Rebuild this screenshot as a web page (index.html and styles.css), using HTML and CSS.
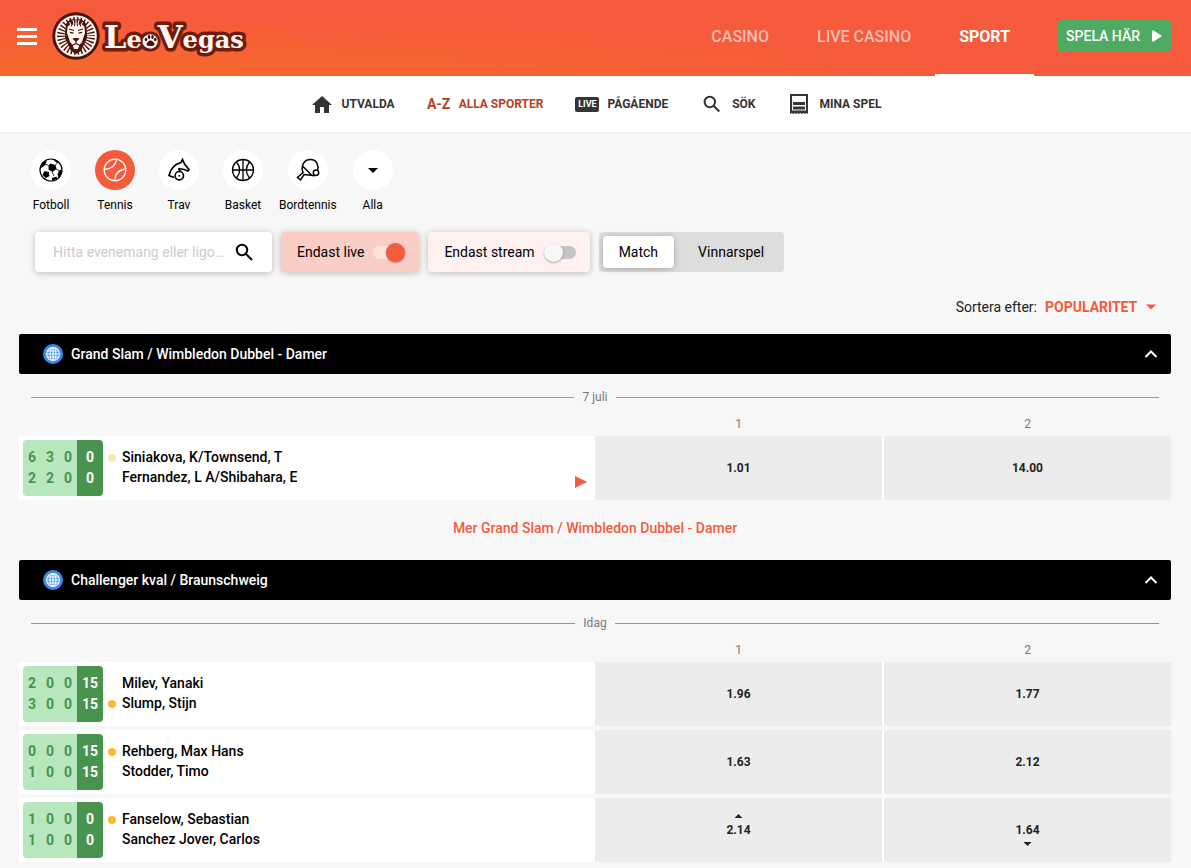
FILE: index.html
```html
<!DOCTYPE html>
<html lang="sv">
<head>
<meta charset="utf-8">
<meta name="viewport" content="width=device-width, initial-scale=1">
<title>LeoVegas Sport</title>
<link rel="stylesheet" href="styles.css">
</head>
<body>
<svg class="defs" aria-hidden="true">
  <symbol id="globe" viewBox="0 0 20 20">
    <circle cx="10" cy="10" r="10" fill="#3a8af5"/>
    <g fill="none" stroke="#fff" stroke-width="1.1"><circle cx="10" cy="10" r="6.400"/><ellipse cx="10" cy="10" rx="3" ry="6.400"/><path d="M10 3.600v12.800M3.600 10h12.800M4.600 7h10.800M4.600 13h10.800"/></g>
  </symbol>
  <symbol id="chevron" viewBox="0 0 14 10"><path d="M1.500 8 7 2.500 12.500 8" fill="none" stroke="#fff" stroke-width="2"/></symbol>
</svg>

<header class="topbar">
  <button class="menu" aria-label="Meny"><span class="menu-line"></span><span class="menu-line"></span><span class="menu-line"></span></button>
  <a class="logo" href="#" aria-label="LeoVegas">
    <svg width="196" height="50" viewBox="0 0 196 50">
      <circle cx="24" cy="25" r="23.700" fill="#4c130a"/>
      <circle cx="24" cy="25" r="20.800" fill="#fff6f2"/>
      <circle cx="24" cy="25" r="19" fill="#4c130a"/>
      <circle cx="24" cy="25" r="15.500" fill="none" stroke="#fff6f2" stroke-width="9" stroke-dasharray="1.900 1.346"/>
      <path d="M14 13c2-4 5-5 10-5s8 1 10 5l1 8-2 10-4 9-5 3-5-3-4-9-2-10z" fill="#4c130a"/>
      <path d="M15.500 16l3-3 1 3 2-4 1 4 1.500-5 1.500 5 1-4 2 4 1-3 3 3 .5 6-1.500 4-1.500 5-2.500 3-1.500 4h-4l-1.500-4-2.500-3-1.500-5-1.500-4z" fill="#fff6f2"/>
      <path d="M17 18l5 1.500M31 18l-5 1.500M17.800 21.300l3.700.8M30.200 21.300l-3.700.8M21 27.500l3 2.500 3-2.500M24 29.500v3M20 34.500l4-2 4 2" fill="none" stroke="#4c130a" stroke-width="1.300"/>
      <path d="M21.500 27h5L24 30z" fill="#4c130a"/>
      <path d="M21 9l1 4M24 7.500V13M27 9l-1 4M17.500 11l1.500 3M30.500 11L29 14" stroke="#fff6f2" stroke-width="1"/>
      <g class="wordmark">
        <text class="wordmark-outline" x="52" y="37"><tspan class="wordmark-cap">L</tspan>eo<tspan class="wordmark-cap">V</tspan>egas</text>
        <text class="wordmark-face" x="52" y="37" aria-hidden="true"><tspan class="wordmark-cap">L</tspan>eo<tspan class="wordmark-cap">V</tspan>egas</text>
      </g>
      <g fill="#4c130a"><circle cx="98.500" cy="30.500" r="7.200" fill="#fff6f2"/><path d="M98.500 29.500c2 0 4 2.500 4 4s-2 1.500-4 1.500-4 0-4-1.500 2-4 4-4z"/><ellipse cx="94" cy="28.500" rx="1.300" ry="1.800"/><ellipse cx="97" cy="26" rx="1.300" ry="1.900"/><ellipse cx="100.500" cy="26" rx="1.300" ry="1.900"/><ellipse cx="103.200" cy="28.500" rx="1.300" ry="1.800"/></g>
    </svg>
  </a>
  <nav class="mainnav" aria-label="Huvudmeny">
    <a class="mainnav-link" href="#">CASINO</a>
    <a class="mainnav-link" href="#">LIVE CASINO</a>
    <a class="mainnav-link is-active" href="#">SPORT</a>
  </nav>
  <button class="play">SPELA HÄR <svg width="10" height="12" viewBox="0 0 10 12"><path d="M0 1.500Q0-.3 1.500.5L9 5.200Q10 6 9 6.800L1.500 11.500Q0 12.300 0 10.500z" fill="#fff"/></svg></button>
</header>

<nav class="subnav" aria-label="Sport">
  <a class="subnav-link" href="#"><svg width="24" height="24" viewBox="0 0 24 24"><path d="M12 4 2 13H5V21h5v-6h4v6h5v-8h3z" fill="#343434"/></svg>UTVALDA</a>
  <a class="subnav-link is-active" href="#"><span class="az">A-Z</span>ALLA SPORTER</a>
  <a class="subnav-link" href="#"><span class="live-tag">LIVE</span>PÅGÅENDE</a>
  <a class="subnav-link" href="#"><svg width="24" height="24" viewBox="0 0 24 24"><g fill="none" stroke="#343434" stroke-width="2"><circle cx="9.800" cy="10" r="5.200"/><path d="M13.500 13.700 19.300 19.500"/></g></svg>SÖK</a>
  <a class="subnav-link" href="#"><svg width="24" height="24" viewBox="0 0 24 24"><path d="M4 20V3h16v17" fill="none" stroke="#343434" stroke-width="2"/><path d="M3 18.500h18V22l-1.500-1-1.500 1-1.500-1-1.500 1-1.500-1-1.500 1-1.500-1L9 22l-1.500-1L6 22l-1.500-1L3 22zM6 10h12v3H6zM6 14.500h12v3H6z" fill="#343434"/></svg>MINA SPEL</a>
</nav>

<main>
  <nav class="sports" aria-label="Sporter">
    <a class="sport" href="#"><span class="sport-icon"><svg width="24" height="24" viewBox="0 0 24 24"><circle cx="12" cy="12" r="11" fill="none" stroke="#000" stroke-width="1.200"/><path d="M11.500 5.500l5 1.500 1 4-4 3-4-2.500v-4zM5.500 13l4 1 1 4-3.500 2-3.500-3zM3.500 5 8 2 6.500 7 1.500 10.500zM14 1.500l4 1 3 3-3.500-1zM20 12.500l2.800-1-.8 5-2.500 3-1-3zM13 20l4.500-1.500L18 20.500l-5 2.300z"/><path d="M6.500 6l3 1.500M10 14l-1 .5M13 14l2 4M17 11l3.500 1.500M16.500 7l2-2.500" stroke="#000" stroke-width=".8"/></svg></span>Fotboll</a>
    <a class="sport is-active" href="#"><span class="sport-icon"><svg width="24" height="24" viewBox="0 0 24 24"><g fill="none" stroke="#fff" stroke-width="1.300"><circle cx="12" cy="12" r="10.800"/><path d="M1.500 11.500C8 11 12.500 8 13.500 1.500M12 22.500C11.500 16 16 11.500 22.500 11"/></g><path d="M4 11.500C9.500 10 12 7 12.500 4M13 19c.5-3 4-6 7.500-7" fill="none" stroke="#fff" stroke-width=".5" stroke-dasharray="1 1"/></svg></span>Tennis</a>
    <a class="sport" href="#"><span class="sport-icon"><svg width="24" height="24" viewBox="0 0 24 24"><g fill="none" stroke="#000" stroke-width="1.700"><path d="M7 19.500 2 17.500C3.500 10.500 8 6 14 4.500L15.500 1.500 17.500 6 22 11.500 21 13 17 11.500 11.500 10.500"/><circle cx="12.300" cy="17.700" r="4.200"/><path d="M12.300 17v1.500M11.500 10.500l2 3"/></g></svg></span>Trav</a>
    <a class="sport" href="#"><span class="sport-icon"><svg width="24" height="24" viewBox="0 0 24 24"><g fill="none" stroke="#000" stroke-width="1.300"><circle cx="12" cy="12" r="10.500"/><path d="M12 1.500v21M1.500 12h21M5.500 4C9.500 9 9.500 15 5.500 20M18.500 4C14.500 9 14.500 15 18.500 20"/></g></svg></span>Basket</a>
    <a class="sport" href="#"><span class="sport-icon"><svg width="24" height="24" viewBox="0 0 24 24"><g fill="none" stroke="#000" stroke-width="1.500"><path d="M18.500 18 17 17.500 8 16.500 4.500 22 1.500 19.500 7 14.500C4.500 8 8 1.500 14.500 1.500S23 8 21.500 12.500M7 8.500 16 17.500"/><circle cx="20" cy="14.800" r="2.700"/></g></svg></span>Bordtennis</a>
    <a class="sport" href="#"><span class="sport-icon"><svg width="24" height="24" viewBox="0 0 24 24"><path d="M7 10h10l-5 5z"/></svg></span>Alla</a>
  </nav>

  <form class="filters">
    <label class="search"><input class="search-input" type="text" placeholder="Hitta evenemang eller ligor här" aria-label="Hitta evenemang eller ligor">
      <svg width="18" height="18" viewBox="0 0 18 18"><g fill="none" stroke="#000" stroke-width="2"><circle cx="7" cy="7" r="5.200"/><path d="M10.800 10.800 17 17"/></g></svg></label>
    <label class="toggle toggle-live">Endast live<input class="switch" type="checkbox" checked></label>
    <label class="toggle toggle-stream">Endast stream<input class="switch" type="checkbox"></label>
    <div class="segment"><button type="button" class="segment-item is-active">Match</button><button type="button" class="segment-item">Vinnarspel</button></div>
  </form>

  <div class="sort">
    <label for="sort">Sortera efter:</label>
    <span class="sort-field"><select class="sort-select" id="sort"><option>POPULARITET</option></select><svg width="10" height="6" viewBox="0 0 10 6"><path d="M0 .5h10L5 5.500z" fill="#f45b3d"/></svg></span>
  </div>

  <section class="league">
    <button class="league-head"><svg width="20" height="20"><use href="#globe"/></svg><span class="league-name">Grand Slam / Wimbledon Dubbel - Damer</span><svg width="14" height="10"><use href="#chevron"/></svg></button>
    <div class="date">7 juli</div>
    <div class="cols"><span></span><div class="odds"><span>1</span><span>2</span></div></div>
    <div class="match">
      <div class="match-info">
        <div class="score"><div class="sets"><span>6</span><span>3</span><span>0</span><span>2</span><span>2</span><span>0</span></div><div class="points"><span>0</span><span>0</span></div></div>
        <div class="players"><span class="player serving is-faded">Siniakova, K/Townsend, T</span><span class="player">Fernandez, L A/Shibahara, E</span></div>
        <svg class="stream" width="12" height="12" viewBox="0 0 12 12"><path d="M0 0 12 6 0 12z" fill="#f45b3d"/></svg>
      </div>
      <div class="odds"><button class="odd">1.01</button><button class="odd">14.00</button></div>
    </div>
    <a class="more" href="#">Mer Grand Slam / Wimbledon Dubbel - Damer</a>
  </section>

  <section class="league">
    <button class="league-head"><svg width="20" height="20"><use href="#globe"/></svg><span class="league-name">Challenger kval / Braunschweig</span><svg width="14" height="10"><use href="#chevron"/></svg></button>
    <div class="date">Idag</div>
    <div class="cols"><span></span><div class="odds"><span>1</span><span>2</span></div></div>
    <div class="match">
      <div class="match-info">
        <div class="score"><div class="sets"><span>2</span><span>0</span><span>0</span><span>3</span><span>0</span><span>0</span></div><div class="points"><span>15</span><span>15</span></div></div>
        <div class="players"><span class="player">Milev, Yanaki</span><span class="player serving">Slump, Stijn</span></div>
      </div>
      <div class="odds"><button class="odd">1.96</button><button class="odd">1.77</button></div>
    </div>
    <div class="match">
      <div class="match-info">
        <div class="score"><div class="sets"><span>0</span><span>0</span><span>0</span><span>1</span><span>0</span><span>0</span></div><div class="points"><span>15</span><span>15</span></div></div>
        <div class="players"><span class="player serving">Rehberg, Max Hans</span><span class="player">Stodder, Timo</span></div>
      </div>
      <div class="odds"><button class="odd">1.63</button><button class="odd">2.12</button></div>
    </div>
    <div class="match">
      <div class="match-info">
        <div class="score"><div class="sets"><span>1</span><span>0</span><span>0</span><span>1</span><span>0</span><span>0</span></div><div class="points"><span>0</span><span>0</span></div></div>
        <div class="players"><span class="player serving">Fanselow, Sebastian</span><span class="player">Sanchez Jover, Carlos</span></div>
      </div>
      <div class="odds"><button class="odd odd-up">2.14</button><button class="odd odd-down">1.64</button></div>
    </div>
  </section>
</main>
</body>
</html>
```
FILE: styles.css
```css
* { box-sizing: border-box; }
body { margin: 0; background: #f7f7f7; color: #000; font-family: Roboto, "Liberation Sans", sans-serif; font-size: 14px; line-height: 20px; }
a { color: inherit; text-decoration: none; }
button { border: 0; padding: 0; background: none; color: inherit; font: inherit; cursor: pointer; }
svg { display: block; flex: none; }
.defs { position: absolute; width: 0; height: 0; }

.topbar { display: flex; align-items: center; height: 76px; padding: 0 20px 0 17px; color: #fff; background: radial-gradient(ellipse 900px 60px at 10% 100%, #f56a2b 0%, #f5633400 100%), #f55a3d; }
.menu { display: flex; flex-direction: column; gap: 4px; width: 20px; margin-bottom: 4px; }
.menu-line { height: 3px; background: #fff; }
.logo { margin: 0 0 4px 15px; }
.wordmark { font-family: "DejaVu Serif", serif; font-weight: 700; font-size: 24px; }
.wordmark-cap { font-size: 32px; }
.wordmark-outline { fill: #4c130a; stroke: #6e1c0e; stroke-width: 7px; stroke-linejoin: round; }
.wordmark-face { fill: #fff6f2; }
.mainnav { display: flex; align-self: stretch; margin-left: auto; font-size: 16px; font-weight: 500; }
.mainnav-link { display: flex; align-items: center; padding: 0 24px; border-bottom: 2px solid transparent; color: #fbbdb1; }
.mainnav-link.is-active { color: #fff; font-weight: 700; border-bottom-color: #fff; }
.play { display: flex; align-items: center; gap: 12px; height: 32px; margin: 0 0 4px 24px; padding: 0 9px 0 8px; border-radius: 4px; background: #4fab64; font-weight: 500; }

.subnav { display: flex; justify-content: center; gap: 32px; height: 57px; background: #fff; border-bottom: 1px solid #efefef; font-size: 12px; font-weight: 700; color: #343434; }
.subnav-link { display: flex; align-items: center; gap: 8px; }
.subnav-link.is-active { color: #b83e27; }
.az { display: flex; justify-content: center; width: 24px; font-size: 14px; white-space: nowrap; }
.live-tag { width: 24px; border-radius: 2px; background: #343434; color: #fff; font-size: 9px; line-height: 15px; text-align: center; }

main { padding: 17px 20px 6px 19px; }
.sports { display: flex; gap: 8px; padding-left: 4px; font-size: 12px; }
.sport { display: flex; flex-direction: column; align-items: center; gap: 5px; min-width: 56px; }
.sport-icon { display: grid; place-items: center; width: 40px; height: 40px; border-radius: 50%; background: #fff; }
.sport.is-active .sport-icon { background: #f45b3d; }

.filters { display: flex; gap: 9px; height: 40px; margin: 17px 0 0 16px; }
.search { display: flex; align-items: center; gap: 8px; width: 237px; padding: 0 19px 0 18px; border-radius: 4px; background: #fff; box-shadow: 0 1px 6px rgba(0, 0, 0, .25); }
.search-input { flex: 1; min-width: 0; padding: 0; border: 0; outline: 0; background: none; font: inherit; text-overflow: ellipsis; }
.search-input::placeholder { color: #ccc; }
.toggle { display: flex; align-items: center; gap: 9px; padding: 0 14px 0 16px; border-radius: 4px; box-shadow: 0 1px 6px rgba(0, 0, 0, .25); }
.toggle-live { background: #facec6; }
.toggle-stream { background: #fef1ef; }
.switch { display: flex; align-items: center; appearance: none; width: 32px; height: 13px; margin: 0; border-radius: 7px; background: #c4c4c4; }
.switch::before { content: ""; width: 19px; height: 19px; flex: none; border-radius: 50%; background: #f7f7f7; box-shadow: 0 1px 2px rgba(0, 0, 0, .35); }
.switch:checked { justify-content: flex-end; background: #fce2dd; }
.switch:checked::before { background: #f45b3d; }
.segment { display: flex; padding: 4px; border-radius: 4px; background: #ddd; }
.segment-item { padding: 0 16px; border-radius: 4px; }
.segment-item.is-active { margin-right: 8px; background: #fff; box-shadow: 0 1px 6px rgba(0, 0, 0, .25); }

.sort { display: flex; justify-content: flex-end; gap: 8px; margin: 25px 15px 17px 0; color: #222; }
.sort-field { display: flex; align-items: center; gap: 8px; }
.sort-select { appearance: none; padding: 0; border: 0; background: none; color: #f45b3d; font: inherit; font-weight: 700; }

.league-head { display: flex; align-items: center; gap: 8px; width: 100%; height: 40px; padding: 0 13px 0 24px; border-radius: 2px; background: #000; color: #fff; font-weight: 500; text-align: left; }
.league-name { flex: 1; }
.date { display: flex; align-items: center; gap: 8px; margin: 13px 12px 0; font-size: 12px; color: #777; }
.date::before, .date::after { content: ""; flex: 1; height: 1px; background: #999; }
.cols, .match { display: grid; grid-template-columns: 1fr 1fr; }
.odds { display: grid; grid-template-columns: 1fr 1fr; gap: 2px; }
.cols { margin-top: 7px; padding-bottom: 2px; font-size: 12px; color: #777; text-align: center; }
.match { min-height: 64px; background: #fff; }
.match + .match { margin-top: 4px; }
.match-info { display: flex; padding: 4px; }
.score { display: flex; width: 80px; border-radius: 4px; overflow: hidden; font-weight: 700; line-height: 21px; text-align: center; }
.sets { display: grid; grid-template-columns: repeat(3, 18px); align-content: center; background: #b8e7bd; color: #48944e; }
.points { display: grid; flex: 1; align-content: center; background: #48944e; color: #fff; }
.players { display: flex; flex-direction: column; justify-content: center; flex: 1; padding: 0 0 2px 5px; font-weight: 500; }
.player { display: flex; align-items: center; gap: 6px; }
.player::before { content: ""; width: 8px; height: 8px; margin-top: 2px; border-radius: 50%; }
.player.serving::before { background: #fdbc2c; }
.player.is-faded::before { background: #fee5b3; }
.stream { align-self: flex-end; margin: 0 4px 8px 0; }
.odd { display: flex; flex-direction: column; align-items: center; justify-content: center; gap: 2px; background: #ececec; color: #222; font-size: 12px; font-weight: 700; }
.odd::before, .odd::after { content: ""; width: 8px; height: 4px; }
.odd-up::before { background: #222; clip-path: polygon(50% 0, 100% 100%, 0 100%); }
.odd-down::after { background: #222; clip-path: polygon(0 0, 100% 0, 50% 100%); }
.more { display: block; margin: 18px 0 22px; color: #f45b3d; font-weight: 500; text-align: center; }
```
